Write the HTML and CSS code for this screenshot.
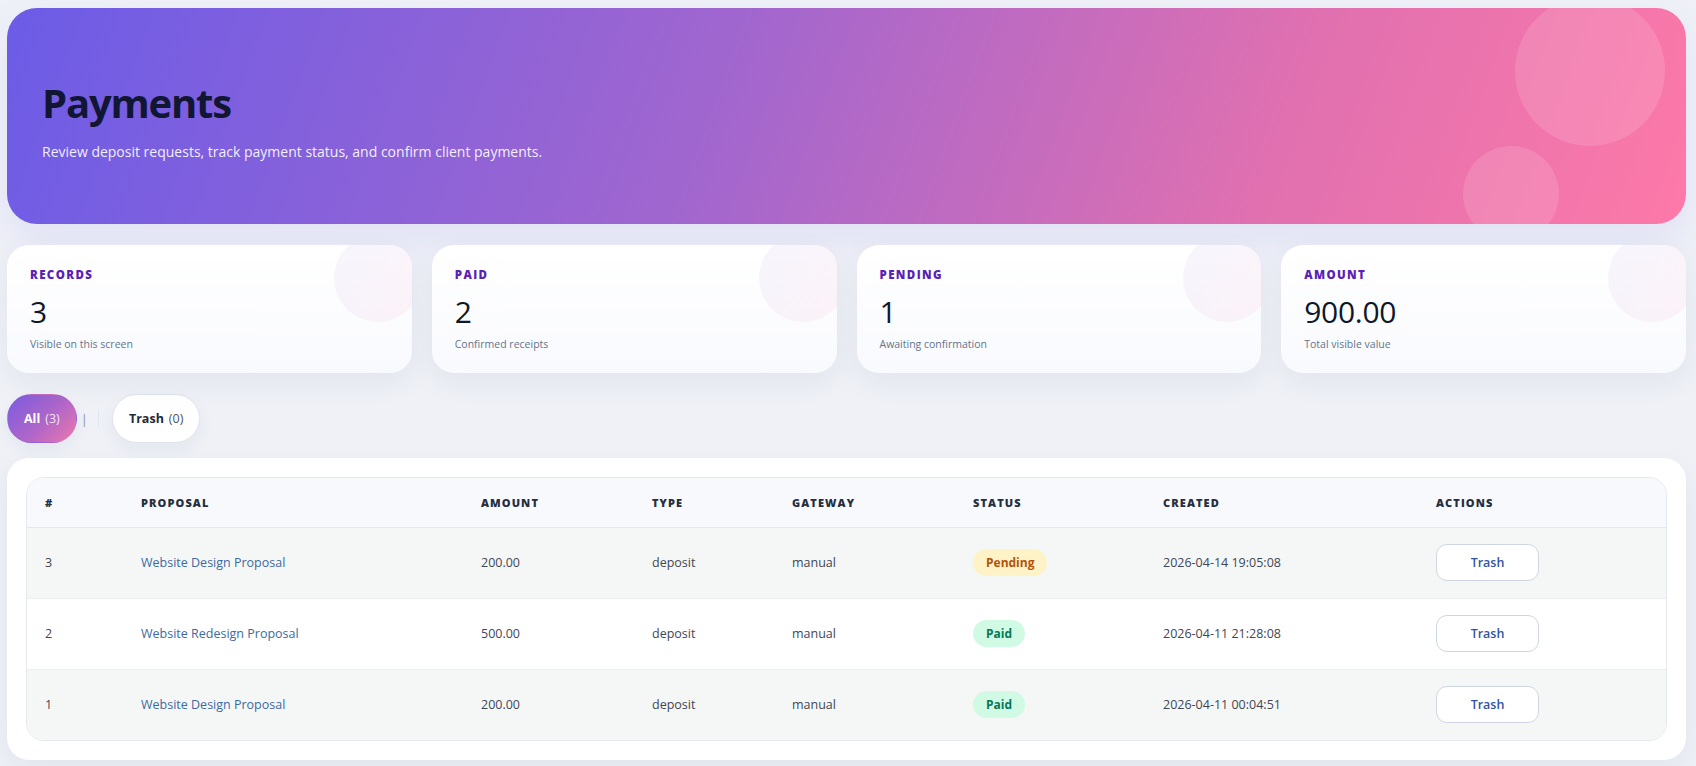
FILE: index.html
```html
<!DOCTYPE html>
<html lang="en">
<head>
<meta charset="utf-8">
<title>Payments</title>
<link rel="stylesheet" href="styles.css">
</head>
<body>
<div class="page">
  <header class="hero">
    <span class="bubble bubble-lg"></span>
    <span class="bubble bubble-sm"></span>
    <h1 class="hero-title">Payments</h1>
    <p class="hero-sub">Review deposit requests, track payment status, and confirm client payments.</p>
  </header>

  <section class="stats">
    <div class="stat">
      <span class="stat-deco"></span>
      <div class="stat-label">Records</div>
      <div class="stat-value">3</div>
      <div class="stat-note">Visible on this screen</div>
    </div>
    <div class="stat">
      <span class="stat-deco"></span>
      <div class="stat-label">Paid</div>
      <div class="stat-value">2</div>
      <div class="stat-note">Confirmed receipts</div>
    </div>
    <div class="stat">
      <span class="stat-deco"></span>
      <div class="stat-label">Pending</div>
      <div class="stat-value">1</div>
      <div class="stat-note">Awaiting confirmation</div>
    </div>
    <div class="stat">
      <span class="stat-deco"></span>
      <div class="stat-label">Amount</div>
      <div class="stat-value">900.00</div>
      <div class="stat-note">Total visible value</div>
    </div>
  </section>

  <nav class="tabs">
    <a class="tab tab-active" href="#">All <span class="tab-count">(3)</span></a>
    <span class="tab-sep">|</span>
    <span class="tab-line"></span>
    <a class="tab" href="#">Trash <span class="tab-count">(0)</span></a>
  </nav>

  <section class="table-card">
    <div class="table-wrap">
      <table class="ptable">
        <thead>
          <tr>
            <th class="c-id">#</th>
            <th class="c-prop">Proposal</th>
            <th class="c-amt">Amount</th>
            <th class="c-type">Type</th>
            <th class="c-gw">Gateway</th>
            <th class="c-status">Status</th>
            <th class="c-created">Created</th>
            <th class="c-actions">Actions</th>
          </tr>
        </thead>
        <tbody>
          <tr>
            <td>3</td>
            <td><a class="plink" href="#">Website Design Proposal</a></td>
            <td>200.00</td>
            <td>deposit</td>
            <td>manual</td>
            <td><span class="badge badge-pending">Pending</span></td>
            <td>2026-04-14 19:05:08</td>
            <td><button class="btn-trash" type="button">Trash</button></td>
          </tr>
          <tr>
            <td>2</td>
            <td><a class="plink" href="#">Website Redesign Proposal</a></td>
            <td>500.00</td>
            <td>deposit</td>
            <td>manual</td>
            <td><span class="badge badge-paid">Paid</span></td>
            <td>2026-04-11 21:28:08</td>
            <td><button class="btn-trash" type="button">Trash</button></td>
          </tr>
          <tr>
            <td>1</td>
            <td><a class="plink" href="#">Website Design Proposal</a></td>
            <td>200.00</td>
            <td>deposit</td>
            <td>manual</td>
            <td><span class="badge badge-paid">Paid</span></td>
            <td>2026-04-11 00:04:51</td>
            <td><button class="btn-trash" type="button">Trash</button></td>
          </tr>
        </tbody>
      </table>
    </div>
  </section>
</div>
</body>
</html>
```

FILE: styles.css
```css
* { box-sizing: border-box; }

html, body {
  margin: 0;
  padding: 0;
}

body {
  background: #eff1f7;
  font-family: "Open Sans", "Noto Sans", "Liberation Sans", sans-serif;
  color: #1f2937;
}

.page {
  padding: 8px 10px 8px 7px;
}

/* Hero */
.hero {
  position: relative;
  overflow: hidden;
  height: 216px;
  border-radius: 30px;
  padding: 70px 35px 0;
  background: linear-gradient(110deg, #6c5ce7 0%, #a066cf 42%, #e070b0 75%, #fd79a8 100%);
  box-shadow: 0 18px 40px rgba(108, 92, 231, 0.10);
}

.bubble {
  position: absolute;
  border-radius: 50%;
  background: rgba(255, 255, 255, 0.13);
}

.bubble-lg {
  width: 150px;
  height: 150px;
  top: -12px;
  right: 21px;
}

.bubble-sm {
  width: 96px;
  height: 96px;
  top: 138px;
  right: 127px;
}

.hero-title {
  position: relative;
  margin: 0;
  font-size: 40px;
  line-height: 50px;
  font-weight: 700;
  letter-spacing: -1.2px;
  color: #111633;
}

.hero-sub {
  position: relative;
  margin: 14px 0 0;
  font-size: 14px;
  line-height: 20px;
  color: rgba(255, 255, 255, 0.92);
}

/* Stat cards */
.stats {
  display: grid;
  grid-template-columns: repeat(4, 1fr);
  gap: 20px;
  margin-top: 21px;
}

.stat {
  position: relative;
  overflow: hidden;
  height: 128px;
  border-radius: 22px;
  padding: 23px 23px 0;
  background: linear-gradient(180deg, #ffffff 0%, #f9fafe 100%);
  box-shadow: 0 10px 30px rgba(30, 41, 90, 0.06);
}

.stat-deco {
  position: absolute;
  width: 88px;
  height: 88px;
  top: -11px;
  right: -10px;
  border-radius: 50%;
  background: linear-gradient(135deg, rgba(108, 92, 231, 0.06), rgba(253, 121, 168, 0.08));
}

.stat-label {
  position: relative;
  font-size: 11.5px;
  line-height: 14px;
  font-weight: 800;
  letter-spacing: 0.12em;
  text-transform: uppercase;
  color: #5b21b6;
}

.stat-value {
  position: relative;
  margin-top: 12px;
  font-size: 30px;
  line-height: 36px;
  font-weight: 500;
  letter-spacing: -0.3px;
  color: #0f172a;
}

.stat-note {
  position: relative;
  margin-top: 7px;
  font-size: 10.5px;
  line-height: 14px;
  color: #64748b;
}

/* Tabs */
.tabs {
  display: flex;
  align-items: center;
  margin-top: 21px;
  height: 49px;
}

.tab {
  display: flex;
  align-items: center;
  height: 49px;
  padding: 0 16px;
  border-radius: 999px;
  border: 1px solid #dfe3ec;
  background: #ffffff;
  text-decoration: none;
  font-size: 12.5px;
  font-weight: 700;
  color: #1f2937;
  box-shadow: 0 6px 16px rgba(30, 41, 90, 0.05);
}

.tab-count {
  margin-left: 5px;
  font-weight: 400;
  color: #4b5563;
}

.tab-active {
  border-color: transparent;
  background: linear-gradient(135deg, #7a5ce0 0%, #b066c8 55%, #ee78ac 100%);
  color: #ffffff;
}

.tab-active .tab-count {
  color: rgba(255, 255, 255, 0.85);
}

.tab-sep {
  margin-left: 4px;
  font-size: 13px;
  color: #8a93a3;
}

.tab-line {
  width: 1px;
  height: 17px;
  margin: 0 13px 0 10px;
  background: #e2e6ee;
}

/* Table */
.table-card {
  margin-top: 15px;
  padding: 19px;
  border-radius: 22px;
  background: #ffffff;
  box-shadow: 0 10px 30px rgba(30, 41, 90, 0.06);
}

.table-wrap {
  border: 1px solid #e5e8ee;
  border-radius: 18px;
  overflow: hidden;
}

.ptable {
  width: 100%;
  border-collapse: collapse;
  table-layout: fixed;
  font-size: 12.5px;
}

.ptable th {
  height: 49px;
  padding: 0 18px;
  text-align: left;
  font-size: 11px;
  font-weight: 800;
  letter-spacing: 0.1em;
  text-transform: uppercase;
  color: #252f3f;
  background: #f8f9fd;
  border-bottom: 1px solid #e5e8ee;
}

.ptable td {
  height: 71px;
  padding: 0 18px;
  color: #3f4654;
  border-bottom: 1px solid #eceef1;
}

.ptable tbody tr:last-child td {
  border-bottom: none;
}

.ptable tbody tr:nth-child(odd) td {
  background: #f5f7f7;
}

.c-id { width: 96px; }
.c-prop { width: 340px; }
.c-amt { width: 171px; }
.c-type { width: 140px; }
.c-gw { width: 181px; }
.c-status { width: 190px; }
.c-created { width: 273px; }
.c-actions { width: auto; }

.plink {
  color: #3b6aa0;
  text-decoration: none;
}

.badge {
  display: inline-block;
  height: 27px;
  line-height: 27px;
  padding: 0 13px;
  border-radius: 999px;
  font-size: 12px;
  font-weight: 700;
}

.badge-pending {
  background: #fef3c7;
  color: #b45309;
}

.badge-paid {
  background: #d1fae5;
  color: #047857;
}

.btn-trash {
  width: 103px;
  height: 37px;
  border: 1px solid #cfd6e2;
  border-radius: 11px;
  background: #ffffff;
  font-family: inherit;
  font-size: 12.5px;
  font-weight: 600;
  color: #2f55a4;
  cursor: pointer;
}
```
